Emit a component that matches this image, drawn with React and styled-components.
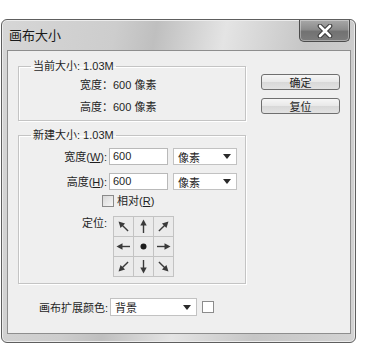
import styled, { createGlobalStyle } from "styled-components"

const GlobalStyle = createGlobalStyle`
  html, body {
    margin: 0;
    padding: 0;
    background: #ffffff;
  }
  body {
    font-family: "Liberation Sans", "Noto Sans CJK SC", sans-serif;
    font-size: 11px;
    color: #1f1f1f;
  }
`

function Arrow({ angle }) {
    return (
        <svg width="19" height="19" viewBox="0 0 19 19">
            <g transform={`rotate(${angle} 9.5 9.5)`}>
                <line x1="9.5" y1="16" x2="9.5" y2="7" stroke="#3a3a3a" strokeWidth="1.4" />
                <polygon points="9.5,2.5 6.3,8.5 12.7,8.5" fill="#3a3a3a" />
            </g>
        </svg>
    )
}

function Dot() {
    return (
        <svg width="19" height="19" viewBox="0 0 19 19">
            <circle cx="9.5" cy="9.5" r="3" fill="#1c1c1c" />
        </svg>
    )
}

const cells = [-45, 0, 45, -90, null, 90, -135, 180, 135]

export default function App() {
    return (
        <Page>
            <GlobalStyle />
            <Window>
                <TitleBar>
                    <Title>画布大小</Title>
                    <CloseButton>
                        <svg width="18" height="14" viewBox="0 0 18 14">
                            <path d="M4 2 L14 12 M14 2 L4 12" stroke="#3c3c3c" strokeWidth="4.6" strokeLinecap="round" />
                            <path d="M4 2 L14 12 M14 2 L4 12" stroke="#ffffff" strokeWidth="2.6" strokeLinecap="round" />
                        </svg>
                    </CloseButton>
                </TitleBar>
                <Client>
                    <LeftCol>
                        <Group>
                            <Legend>当前大小: 1.03M</Legend>
                            <InfoRow>宽度：600 像素</InfoRow>
                            <InfoRow>高度：600 像素</InfoRow>
                        </Group>
                        <Group $gap={7} $bottom={6}>
                            <Legend>新建大小: 1.03M</Legend>
                            <FieldRow $top={5}>
                                <Label>宽度(<u>W</u>):</Label>
                                <Input>600</Input>
                                <Select $width={64}>
                                    像素
                                    <Caret />
                                </Select>
                            </FieldRow>
                            <FieldRow $top={8}>
                                <Label>高度(<u>H</u>):</Label>
                                <Input>600</Input>
                                <Select $width={64}>
                                    像素
                                    <Caret />
                                </Select>
                            </FieldRow>
                            <CheckRow>
                                <CheckBox />
                                <span>相对(<u>R</u>)</span>
                            </CheckRow>
                            <AnchorRow>
                                <Label>定位:</Label>
                                <AnchorGrid>
                                    {cells.map((a, i) => (
                                        <Cell key={i}>{a === null ? <Dot /> : <Arrow angle={a} />}</Cell>
                                    ))}
                                </AnchorGrid>
                            </AnchorRow>
                        </Group>
                        <ExtendRow>
                            <span>画布扩展颜色:</span>
                            <Select $width={87} $height={18} $left={2}>
                                背景
                                <Caret />
                            </Select>
                            <Swatch />
                        </ExtendRow>
                    </LeftCol>
                    <RightCol>
                        <Button>确定</Button>
                        <Button>复位</Button>
                    </RightCol>
                </Client>
            </Window>
        </Page>
    )
}

const Page = styled.div`
    padding: 19px 0 0 1px;
`;

const Window = styled.div`
    box-sizing: border-box;
    width: 355px;
    height: 324px;
    border: 1px solid #5e5e5e;
    border-radius: 6px;
    padding: 0 4px 8px 5px;
    display: flex;
    flex-direction: column;
    background: linear-gradient(100deg, #d6d6d6 0%, #cdcdcd 28%, #bfbfbf 38%, #e4e4e4 55%, #c6c6c6 75%, #d3d3d3 100%);
    box-shadow: inset 0 0 0 1px #ececec;
`;

const TitleBar = styled.div`
    height: 30px;
    display: flex;
    justify-content: space-between;
    align-items: flex-start;
    flex-shrink: 0;
`;

const Title = styled.div`
    font-family: "Noto Sans CJK SC", sans-serif;
    font-size: 13px;
    line-height: 16px;
    padding: 7px 0 0 2px;
    color: #1a1a1a;
`;

const CloseButton = styled.div`
    box-sizing: border-box;
    width: 51px;
    height: 22px;
    margin-right: 1px;
    border: 1px solid #4c4c4c;
    border-top: none;
    border-radius: 0 0 5px 5px;
    background: linear-gradient(#a8a8a8, #8c8c8c 45%, #727272 55%, #7c7c7c);
    box-shadow: inset 0 0 0 1px rgba(255, 255, 255, 0.35);
    display: flex;
    align-items: center;
    justify-content: center;
`;

const Client = styled.div`
    box-sizing: border-box;
    height: 284px;
    border: 1px solid #8e8e8e;
    background: #efefef;
    display: flex;
    padding: 8px 0 0 10px;
`;

const LeftCol = styled.div`
    width: 228px;
    display: flex;
    flex-direction: column;
`;

const RightCol = styled.div`
    margin: 15px 0 0 15px;
    display: flex;
    flex-direction: column;
    gap: 8px;
`;

const Group = styled.fieldset`
    box-sizing: border-box;
    width: 228px;
    margin: ${p => p.$gap || 0}px 0 0 0;
    padding: 1px 0 ${p => p.$bottom ?? 2}px 0;
    border: 1px solid #c4c4c4;
    box-shadow: 1px 1px 0 #ffffff, inset 1px 1px 0 #ffffff;
    min-width: 0;
`;

const Legend = styled.legend`
    margin-left: 12px;
    padding: 0 2px;
    line-height: 14px;
    color: #1f1f1f;
`;

const InfoRow = styled.div`
    line-height: 22px;
    padding-left: 61px;
`;

const FieldRow = styled.div`
    display: flex;
    align-items: center;
    margin-top: ${p => p.$top}px;
`;

const Label = styled.div`
    width: 88px;
    text-align: right;
    line-height: 14px;
`;

const Input = styled.div`
    box-sizing: border-box;
    width: 59px;
    height: 17px;
    margin-left: 2px;
    padding-left: 3px;
    background: #ffffff;
    border: 1px solid #b9b9b9;
    line-height: 15px;
`;

const Select = styled.div`
    box-sizing: border-box;
    width: ${p => p.$width}px;
    height: ${p => p.$height || 17}px;
    margin-left: ${p => p.$left ?? 5}px;
    padding: 0 4px 0 4px;
    background: #ffffff;
    border: 1px solid #c2c2c2;
    display: flex;
    align-items: center;
    justify-content: space-between;
`;

const Caret = styled.span`
    width: 0;
    height: 0;
    border-left: 4px solid transparent;
    border-right: 4px solid transparent;
    border-top: 5px solid #2a2a2a;
    margin-right: 1px;
`;

const CheckRow = styled.label`
    display: flex;
    align-items: center;
    gap: 3px;
    margin: 5px 0 0 83px;
    line-height: 12px;
`;

const CheckBox = styled.span`
    box-sizing: border-box;
    width: 12px;
    height: 12px;
    border: 1px solid #8a8a8a;
    background: linear-gradient(135deg, #d8d8d8, #f6f6f6);
`;

const AnchorRow = styled.div`
    display: flex;
    align-items: flex-start;
    margin-top: 9px;
`;

const AnchorGrid = styled.div`
    margin-left: 6px;
    display: grid;
    grid-template-columns: repeat(3, 19px);
    grid-auto-rows: 19px;
    gap: 1px;
    padding: 1px;
    background: #c3c3c3;
`;

const Cell = styled.div`
    background: #ebebeb;
    display: flex;
    align-items: center;
    justify-content: center;
`;

const ExtendRow = styled.div`
    display: flex;
    align-items: center;
    margin: 14px 0 0 21px;
`;

const Swatch = styled.span`
    box-sizing: border-box;
    width: 12px;
    height: 12px;
    margin-left: 5px;
    background: #ffffff;
    border: 1px solid #8c8c8c;
`;

const Button = styled.button`
    box-sizing: border-box;
    width: 79px;
    height: 16px;
    padding: 0;
    border: 1px solid #6f6f6f;
    border-radius: 3px;
    background: linear-gradient(#f6f6f6, #e8e8e8 50%, #d8d8d8 51%, #e2e2e2);
    font-family: "Noto Sans CJK SC", sans-serif;
    font-size: 11px;
    line-height: 14px;
    color: #1f1f1f;
`;
